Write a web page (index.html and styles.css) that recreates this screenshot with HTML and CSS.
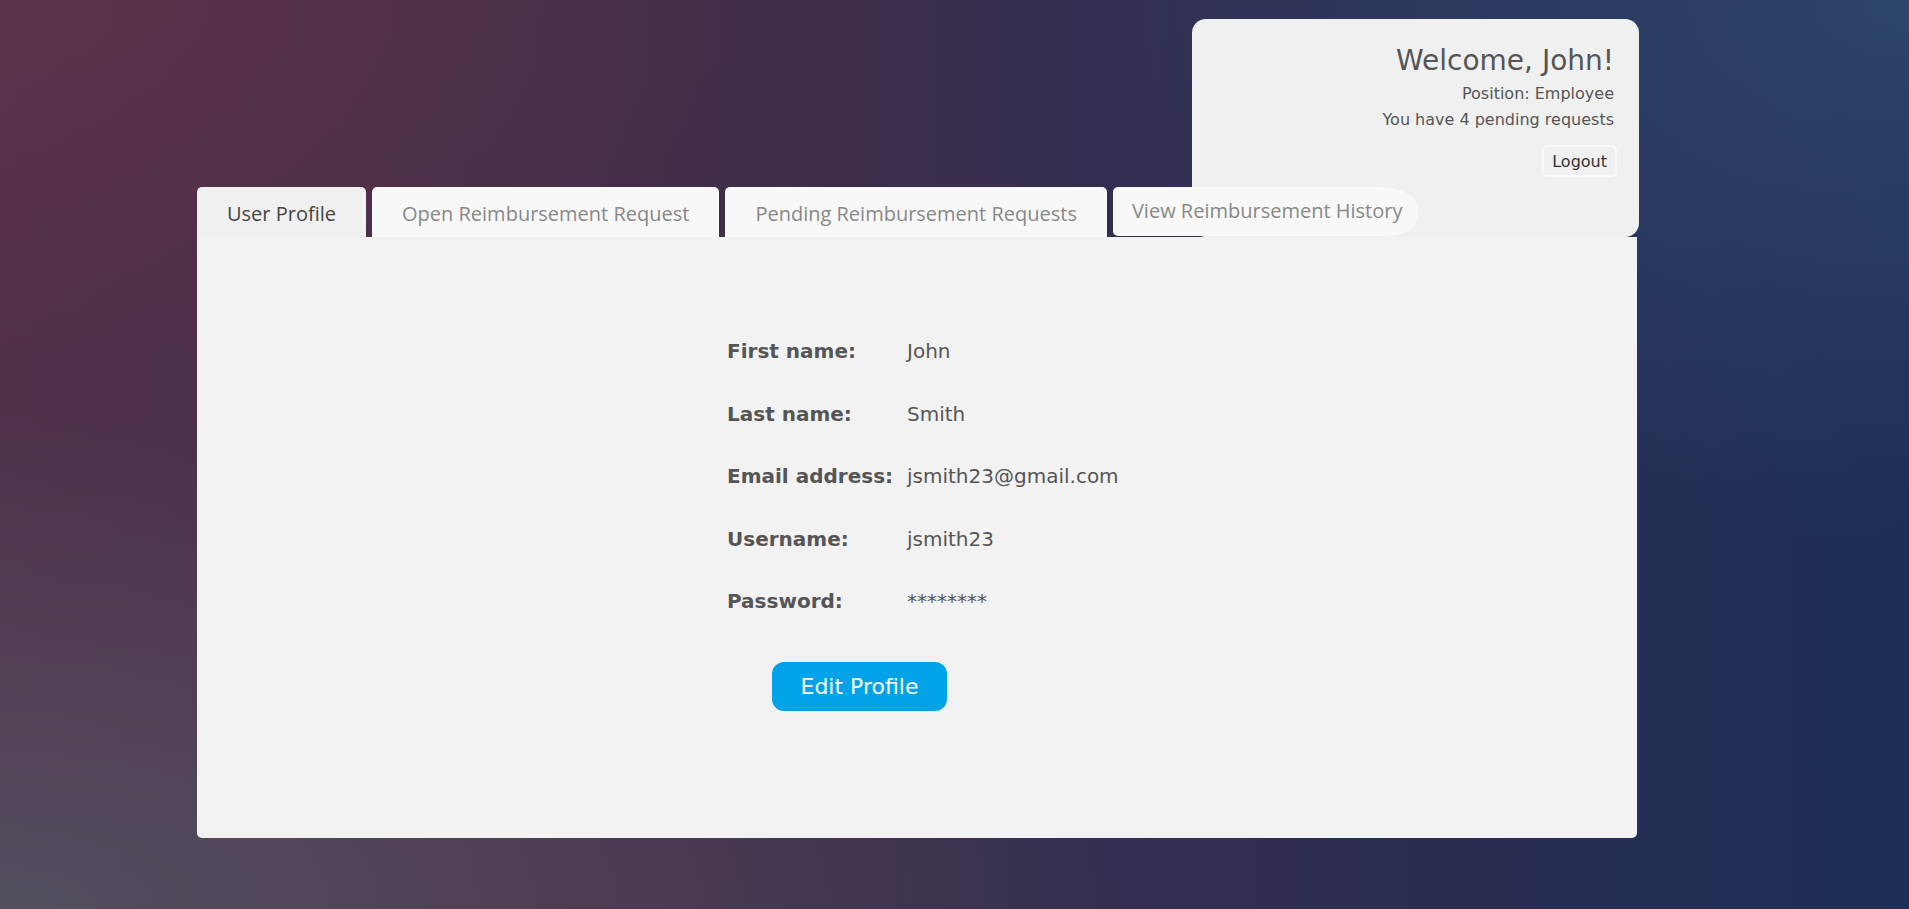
FILE: index.html
```html
<!DOCTYPE html>
<html lang="en">
<head>
<meta charset="utf-8">
<title>Employee Portal</title>
<link rel="stylesheet" href="styles.css">
</head>
<body>
<div class="page">
  <div class="header-card">
    <h1 class="welcome">Welcome, John!</h1>
    <div class="meta">Position: Employee</div>
    <div class="meta">You have 4 pending requests</div>
    <button class="logout">Logout</button>
  </div>
  <nav class="tabs">
    <div class="tab active">User Profile</div>
    <div class="tab">Open Reimbursement Request</div>
    <div class="tab">Pending Reimbursement Requests</div>
    <div class="tab last">View Reimbursement History</div>
  </nav>
  <main class="panel">
    <div class="profile">
      <div class="row"><span class="label">First name:</span><span class="value">John</span></div>
      <div class="row"><span class="label">Last name:</span><span class="value">Smith</span></div>
      <div class="row"><span class="label">Email address:</span><span class="value">jsmith23@gmail.com</span></div>
      <div class="row"><span class="label">Username:</span><span class="value">jsmith23</span></div>
      <div class="row"><span class="label">Password:</span><span class="value">********</span></div>
      <button class="edit">Edit Profile</button>
    </div>
  </main>
</div>
</body>
</html>
```
FILE: styles.css
```css
html, body {
  margin: 0;
  padding: 0;
}
body {
  min-height: 909px;
  font-family: "Comic Sans MS", "DejaVu Sans", sans-serif;
  color: #555;
  background:
    radial-gradient(ellipse 60% 55% at 0% 100%, rgba(84, 82, 98, 0.9), rgba(84, 82, 98, 0) 100%),
    radial-gradient(ellipse 45% 60% at 100% 0%, rgba(48, 72, 112, 0.85), rgba(48, 72, 112, 0) 100%),
    radial-gradient(ellipse 40% 40% at 0% 0%, rgba(96, 54, 72, 0.7), rgba(96, 54, 72, 0) 100%),
    linear-gradient(to right, #51304a 0%, #462d48 30%, #322d50 60%, #1d2e56 100%);
}
.page {
  width: 1440px;
  margin-left: 197px;
  padding-top: 19px;
  display: flex;
  flex-direction: column;
}
.header-card {
  align-self: flex-end;
  margin-right: -2px;
  width: 447px;
  height: 218px;
  box-sizing: border-box;
  background: #f0f0f0;
  border-radius: 14px;
  padding: 24px 25px 0 0;
  display: flex;
  flex-direction: column;
  align-items: flex-end;
  margin-bottom: -50px;
}
.welcome {
  margin: 0;
  font-weight: normal;
  font-size: 28px;
  line-height: 36px;
  color: #555;
}
.meta {
  font-size: 16px;
  line-height: 26px;
  color: #555;
}
.welcome + .meta {
  margin-top: 2px;
}
.logout {
  margin-top: 12px;
  font-family: "Comic Sans MS", "DejaVu Sans", sans-serif;
  font-size: 16px;
  color: #333;
  background: #f0f0f0;
  border: 2px solid #f9f9f9;
  border-radius: 5px;
  box-sizing: border-box;
  height: 32px;
  padding: 0 8px;
  margin-right: -3px;
}
.tabs {
  position: relative;
  z-index: 1;
  display: flex;
  gap: 6px;
  height: 50px;
}
.tab {
  font-family: "Open Sans", sans-serif;
  font-size: 20px;
  color: #888;
  background: #f8f8f8;
  border-radius: 5px 5px 0 0;
  padding: 2px 30px 0;
  display: flex;
  align-items: center;
}
.tab.active {
  background: #f0f0f0;
  color: #444;
}
.tab.last {
  border-radius: 5px 40px 30px 5px / 5px 20px 20px 5px;
  height: 47px;
  padding: 0 16px 2px 19px;
}
.panel {
  height: 601px;
  background: #f2f2f2;
  border-radius: 0 0 5px 5px;
  display: flex;
  justify-content: center;
}
.profile {
  width: 380px;
  padding-top: 83px;
  display: flex;
  flex-direction: column;
}
.row {
  height: 62.5px;
  display: flex;
  align-items: center;
  font-size: 20px;
}
.label {
  width: 180px;
  font-weight: bold;
  flex: none;
}
.value {
  color: #555;
}
.edit {
  align-self: flex-start;
  margin-left: 45px;
  margin-top: 29px;
  width: 175px;
  height: 49px;
  background: #00a3e8;
  color: #fff;
  border: none;
  border-radius: 12px;
  font-family: "Comic Sans MS", "DejaVu Sans", sans-serif;
  font-size: 22px;
}
```
